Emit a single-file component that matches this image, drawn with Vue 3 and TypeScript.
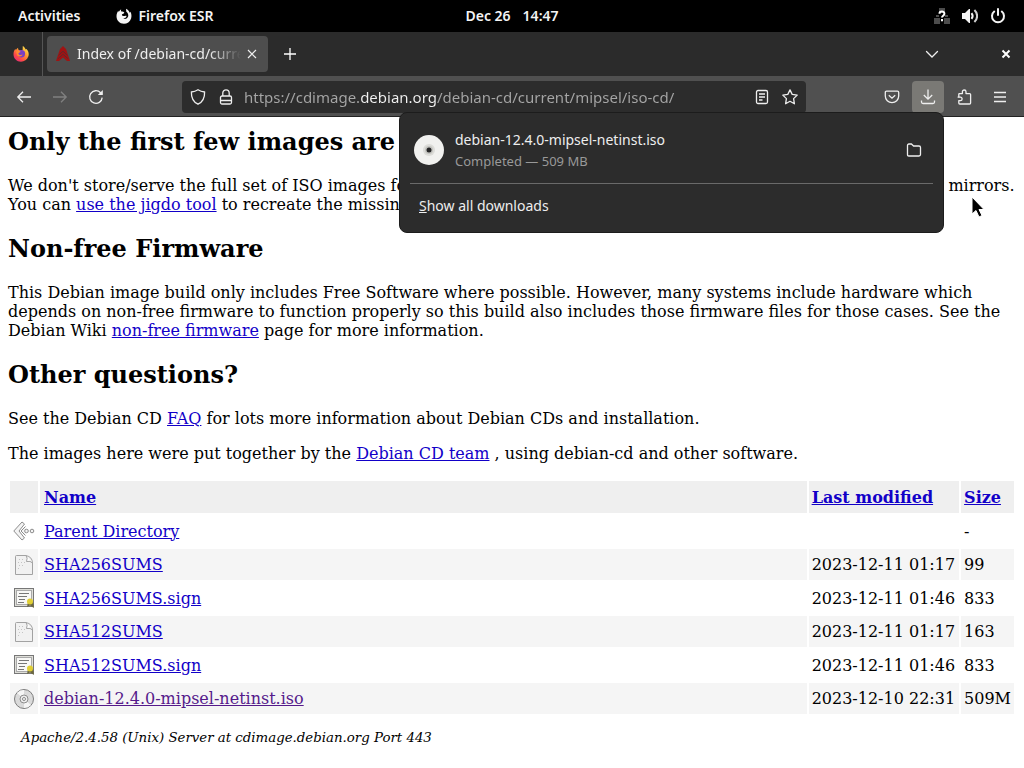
<script setup lang="ts">
import { ref } from 'vue'

interface Entry {
  name: string
  kind: 'back' | 'text' | 'sign' | 'disc'
  modified: string
  size: string
  visited?: boolean
}

const entries: Entry[] = [
  { name: 'Parent Directory', kind: 'back', modified: '', size: '-' },
  { name: 'SHA256SUMS', kind: 'text', modified: '2023-12-11 01:17', size: '99' },
  { name: 'SHA256SUMS.sign', kind: 'sign', modified: '2023-12-11 01:46', size: '833' },
  { name: 'SHA512SUMS', kind: 'text', modified: '2023-12-11 01:17', size: '163' },
  { name: 'SHA512SUMS.sign', kind: 'sign', modified: '2023-12-11 01:46', size: '833' },
  { name: 'debian-12.4.0-mipsel-netinst.iso', kind: 'disc', modified: '2023-12-10 22:31', size: '509M', visited: true },
]

const address = ref('https://cdimage.debian.org/debian-cd/current/mipsel/iso-cd/')
</script>

<template>
  <div class="screen">
    <header class="topbar">
      <div class="top-left">
        <button type="button">Activities</button>
        <button type="button" class="app-menu">
          <svg width="16" height="16" viewBox="0 0 16 16" aria-hidden="true">
            <path d="M5.2 1.2C4.8 2.2 4.9 3 5.5 3.6 6.5 3.4 7.6 3.6 8.3 4.4 8 5.6 6.9 5.7 6.1 6.3 5.5 7 6.3 8 7.4 8.1 8.6 8.2 9.4 7.4 10.6 8 10.2 9.7 8.7 10.8 7 10.5 9 11.6 11.6 10.6 12.2 8.3 12.6 6.3 11.7 4.6 10.3 3.7L10 .8C12 1.8 13.2 3.2 13.6 4.7L14.4 3.8C15.5 5.8 15.8 8.3 15.1 10.4 14 13.8 11.1 15.8 7.9 15.8 3.7 15.8.5 12.4.5 8.3.5 6.4 1.1 4.4 2.3 2.8L2.7 3.9C3.3 2.8 4.1 1.8 5.2 1.2Z" fill="#f4f4f4" />
          </svg>
          <span>Firefox ESR</span>
        </button>
      </div>
      <button type="button" class="clock"><span>Dec 26</span><span>14:47</span></button>
      <button type="button" class="tray" aria-label="System">
        <svg width="16" height="16" viewBox="0 0 16 16">
          <path d="M5 0h6v5H5zM0 10h6v6H0zM10 10h6v6h-6zM2 7h3v2H2zM11 7h3v2h-3z" fill="#4c4c4c" />
          <path d="M5.5 5.8C5.5 2.8 10.4 2.7 10.4 5.8 10.4 7.8 8 7.8 8 9.6M8 11.1V13.2" fill="none" stroke="#fff" stroke-width="2" />
        </svg>
        <svg width="16" height="16" viewBox="0 0 16 16">
          <path d="M0 5h3l4-4h1v14H7l-4-4H0z" fill="#f4f4f4" />
          <path d="M9.5 5.2C10.8 6.8 10.8 9.2 9.5 10.8" fill="none" stroke="#f4f4f4" stroke-width="2" />
          <path d="M12.4 2C16 5.4 16 10.6 12.4 14" fill="none" stroke="#d0d0d0" stroke-width="2" />
        </svg>
        <svg width="16" height="16" viewBox="0 0 16 16" fill="none" stroke="#f4f4f4" stroke-width="2" stroke-linecap="round">
          <path d="M4.2 3.6A6 6 0 1 0 11.8 3.6M8 1V7" />
        </svg>
      </button>
    </header>

    <div class="tabbar">
      <button type="button" class="view" aria-label="Firefox View">
        <svg width="16" height="16" viewBox="0 0 16 16">
          <defs>
            <linearGradient id="fox" x1="0.85" y1="0.1" x2="0.2" y2="0.95">
              <stop offset="0" stop-color="#ffe04a" />
              <stop offset="0.4" stop-color="#ff9431" />
              <stop offset="0.75" stop-color="#ff4848" />
              <stop offset="1" stop-color="#e52e75" />
            </linearGradient>
          </defs>
          <path d="M9.8 0C11.4 1 12.3 2.3 12.8 3.6L13.6 3C15.6 5.2 16.2 8 15.3 10.6 14.1 13.8 11.3 15.8 8 15.8 3.8 15.8.5 12.5.5 8.3.5 6.2 1.2 4.3 2.3 3L2.9 4.1C3.4 3 4.2 2.2 5.1 1.7 5 3 5.3 3.6 6 4L9.6 4.2Z" fill="url(#fox)" />
          <circle cx="8.4" cy="7.8" r="3.7" fill="#7a3fc4" />
          <path d="M3.1 5.6C4.5 4.3 6.5 4.4 7.6 5.5 7.1 6.6 5.8 6.6 5.4 7.4 5.6 9 8 9.3 9.7 8.5 8.8 10.8 5.6 11.2 4.1 9.2Z" fill="#ff8a32" />
        </svg>
      </button>
      <div class="tab">
        <svg class="favicon" width="16" height="16" viewBox="0 0 16 16" aria-hidden="true">
          <path d="M8 0 11 3 15 15H12L8 11.5 4 15H1L5 3Z" fill="#a01313" />
          <path d="M3.6 9.2 8 5.2 12.4 9.2M2.8 12.8 8 8.4 13.2 12.8" fill="none" stroke="#60282b" stroke-width="1" />
        </svg>
        <span class="tab-title">Index of /debian-cd/current</span>
        <button type="button" class="tab-close" aria-label="Close tab">
          <svg width="10" height="10" viewBox="0 0 10 10"><path d="M1 1 9 9M9 1 1 9" fill="none" stroke="#eee" stroke-width="1.2" /></svg>
        </button>
      </div>
      <button type="button" class="icon-btn" aria-label="New tab">
        <svg width="14" height="14" viewBox="0 0 14 14"><path d="M7 1V13M1 7H13" fill="none" stroke="#fff" stroke-width="1.3" /></svg>
      </button>
      <div class="grow"></div>
      <button type="button" class="icon-btn" aria-label="List all tabs">
        <svg width="14" height="14" viewBox="0 0 14 14"><path d="M1.5 4.5 7 10 12.5 4.5" fill="none" stroke="#eee" stroke-width="1.3" stroke-linecap="round" /></svg>
      </button>
      <button type="button" class="icon-btn window-close" aria-label="Close window">
        <svg width="10" height="10" viewBox="0 0 10 10"><path d="M1.5 1.5 8.5 8.5M8.5 1.5 1.5 8.5" fill="none" stroke="#fff" stroke-width="2" /></svg>
      </button>
    </div>

    <nav class="toolbar" aria-label="Navigation">
      <button type="button" class="icon-btn" aria-label="Back">
        <svg width="16" height="16" viewBox="0 0 16 16"><path d="M15 8H2M7 2.8 1.8 8 7 13.2" /></svg>
      </button>
      <button type="button" class="icon-btn" aria-label="Forward" disabled>
        <svg width="16" height="16" viewBox="0 0 16 16"><path d="M1 8H14M9 2.8 14.2 8 9 13.2" /></svg>
      </button>
      <button type="button" class="icon-btn" aria-label="Reload">
        <svg width="16" height="16" viewBox="0 0 16 16"><path d="M14.2 8.6A6.3 6.3 0 1 1 12.6 3.8L14 5.2" /><path d="M14.8 1V6H9.8Z" fill="#eee" stroke="none" /></svg>
      </button>
      <div class="spacer"></div>
      <div class="urlbar">
        <svg width="16" height="16" viewBox="0 0 16 16" aria-hidden="true"><path d="M8 .8C9.8 2 12.2 2.8 14.6 3 14.8 8.5 12.8 13 8 15.2 3.2 13 1.2 8.5 1.4 3 3.8 2.8 6.2 2 8 .8Z" /></svg>
        <svg width="16" height="16" viewBox="0 0 16 16" aria-hidden="true"><rect x="2.5" y="7" width="11" height="8" rx="1.5" /><path d="M4.8 7V4A3.2 3.2 0 0 1 11.2 4V7M2.5 11.5H13.5" /></svg>
        <input v-model="address" type="text" aria-label="Address" spellcheck="false" />
        <button type="button" aria-label="Reader view">
          <svg width="16" height="16" viewBox="0 0 16 16"><rect x="2.5" y="1.5" width="11" height="13" rx="1.5" /><path d="M5 5H11M5 8H11M5 11H8.5" /></svg>
        </button>
        <button type="button" aria-label="Bookmark this page">
          <svg width="16" height="16" viewBox="0 0 16 16"><path d="M8 .9 10.2 5.4 15.2 6.1 11.6 9.6 12.4 14.8 8 12.3 3.6 14.8 4.4 9.6.8 6.1 5.8 5.4Z" stroke-linejoin="round" /></svg>
        </button>
      </div>
      <div class="spacer"></div>
      <button type="button" class="icon-btn" aria-label="Pocket">
        <svg width="16" height="16" viewBox="0 0 16 16"><path d="M2.5 2.2H13.5Q14.7 2.2 14.7 3.4V7A6.7 6.7 0 0 1 1.3 7V3.4Q1.3 2.2 2.5 2.2ZM4.8 6.2 8 9.2 11.2 6.2" /></svg>
      </button>
      <button type="button" class="icon-btn active" aria-label="Downloads" aria-expanded="true">
        <svg width="16" height="16" viewBox="0 0 16 16"><path d="M8 .5V10M3.8 6 8 10.2 12.2 6M1.5 11.5V13Q1.5 14.5 3 14.5H13Q14.5 14.5 14.5 13V11.5" /></svg>
      </button>
      <button type="button" class="icon-btn" aria-label="Extensions">
        <svg width="16" height="16" viewBox="0 0 16 16"><path d="M2.8 4.6H6.4V2.8A1.8 1.8 0 0 1 10 2.800V4.6H13.6Q14.6 4.6 14.6 5.6V14Q14.6 15 13.6 15H3.800Q2.8 15 2.8 14V11.6H4.4A1.700 1.700 0 0 0 4.400 8.2H1.600" stroke-linejoin="round" /><path d="M2.8 8.2V4.6" /></svg>
      </button>
      <button type="button" class="icon-btn" aria-label="Menu">
        <svg width="16" height="16" viewBox="0 0 16 16"><path d="M2 3.5H14M2 8H14M2 12.5H14" /></svg>
      </button>

      <section class="downloads" aria-label="Downloads">
        <div class="download">
          <svg width="30" height="30" viewBox="0 0 30 30" aria-hidden="true">
            <circle cx="15" cy="15" r="15" fill="#f1f1ef" />
            <circle cx="15" cy="15" r="6" fill="#dcdcd8" />
            <circle cx="15" cy="15" r="4" fill="#c4c4c0" />
            <circle cx="15" cy="15" r="2.5" fill="#262626" />
          </svg>
          <div class="download-text">
            <div class="download-name">debian-12.4.0-mipsel-netinst.iso</div>
            <div class="download-state">Completed — 509 MB</div>
          </div>
          <button type="button" class="folder" aria-label="Show in folder">
            <svg width="16" height="16" viewBox="0 0 16 16"><path d="M1.5 12.8V3.4Q1.5 2 2.9 2H5.4L7.6 4H13Q14.5 4 14.5 5.4V12.6Q14.5 14 13 14H2.8Q1.5 14 1.5 12.8Z" /></svg>
          </button>
        </div>
        <button type="button" class="show-all"><u>S</u>how all downloads</button>
      </section>
    </nav>

    <main class="page">
      <h2>Only the first few images are available</h2>
      <p>
        We don't store/serve the full set of ISO images for all architectures, to reduce the amount of space taken up on our mirrors.
        You can <a href="#jigdo">use the jigdo tool</a> to recreate the missing ISO images instead.
      </p>
      <h2>Non-free Firmware</h2>
      <p>
        This Debian image build only includes Free Software where possible. However, many systems include hardware which
        depends on non-free firmware to function properly so this build also includes those firmware files for those cases. See the
        Debian Wiki <a href="#firmware">non-free firmware</a> page for more information.
      </p>
      <h2>Other questions?</h2>
      <p>See the Debian CD <a href="#faq">FAQ</a> for lots more information about Debian CDs and installation.</p>
      <p>The images here were put together by the <a href="#team">Debian CD team</a> , using debian-cd and other software.</p>

      <table>
        <thead>
          <tr>
            <th class="icon"></th>
            <th class="name"><a href="#name">Name</a></th>
            <th class="date"><a href="#modified">Last modified</a></th>
            <th><a href="#size">Size</a></th>
          </tr>
        </thead>
        <tbody>
          <tr v-for="entry in entries" :key="entry.name">
            <td class="icon">
              <svg v-if="entry.kind === 'back'" width="22" height="22" viewBox="0 0 22 22" fill="#f4f4f4" stroke="#8c8c8c">
                <path d="M9 2 .8 11 9 20 11.500 18 6 11 11.500 4ZM12.500 6.5 8 11 12.500 15.5" />
                <circle cx="13.5" cy="11" r="1.8" /><circle cx="19" cy="11" r="1.8" />
              </svg>
              <svg v-else-if="entry.kind === 'text'" width="22" height="22" viewBox="0 0 22 22">
                <path d="M3.500 1.5H13Q19.5 3 19.5 9V20.500H2.500V2.500Q2.500 1.500 3.500 1.500Z" fill="#f1f1f1" stroke="#a2a2a2" />
                <path d="M13 1.5Q15 4 13.5 7.500 17.500 6.500 19.5 9" fill="#fff" stroke="#a2a2a2" />
                <path d="M6 5.500H10M5 8.500H12M6 11.500H11M5 14.500H8" stroke="#c4c4c4" stroke-dasharray="1 2" />
              </svg>
              <svg v-else-if="entry.kind === 'sign'" width="22" height="22" viewBox="0 0 22 22">
                <rect x="1.5" y="1.5" width="19" height="18" fill="#deded8" stroke="#777" />
                <rect x="3.5" y="3.5" width="15" height="14" fill="#f8f8f6" stroke="#aaa" />
                <path d="M6 6.5H16M5 9.5H14M6 12.5H12M5 15.5H11" stroke="#777" />
                <path d="M15 15 14 20 17 18.500 21 21 20 15Z" fill="#6d6840" />
                <circle cx="17" cy="14.500" r="3" fill="#e0cf35" />
              </svg>
              <svg v-else width="22" height="22" viewBox="0 0 22 22" fill="none">
                <circle cx="11" cy="11" r="9.5" fill="#dadada" stroke="#7d7d7d" />
                <path d="M11 11 4 5A9 9 0 0 1 11 2ZM11 11 18 17A9 9 0 0 1 11 20Z" fill="#f5f5f5" />
                <circle cx="11" cy="11" r="4" fill="#ededed" stroke="#8e8e8e" />
                <circle cx="11" cy="11" r="1.500" fill="#fff" stroke="#888" />
              </svg>
            </td>
            <td class="name"><a :href="'#' + entry.name" :class="{ visited: entry.visited }">{{ entry.name }}</a></td>
            <td class="date">{{ entry.modified }}</td>
            <td>{{ entry.size }}</td>
          </tr>
        </tbody>
      </table>
      <address>Apache/2.4.58 (Unix) Server at cdimage.debian.org Port 443</address>
    </main>

    <svg class="pointer" width="16" height="24" viewBox="0 0 16 24" aria-hidden="true">
      <path d="M2 1V18L6 14.500 9 21 12 19.500 9 13.500H14Z" fill="#000" stroke="#fff" />
    </svg>
  </div>
</template>

<style>
body {
  margin: 0;
  background: #fff;
}
</style>

<style scoped>
.screen {
  position: relative;
  min-height: 100vh;
  overflow: hidden;
  color: #eee;
  font-family: "Noto Sans", "Open Sans", sans-serif;
  font-size: 14px;
  line-height: 20px;
}
button {
  margin: 0;
  padding: 0;
  border: 0;
  background: none;
  color: inherit;
  font: inherit;
}
svg {
  display: block;
  flex: none;
}
.topbar {
  display: grid;
  grid-template-columns: 1fr auto 1fr;
  align-items: center;
  height: 32px;
  padding: 0 18px;
  background: #000;
  color: #f4f4f4;
  font-weight: 600;
}
.top-left,
.app-menu,
.clock,
.tray {
  display: flex;
  align-items: center;
}
.top-left {
  gap: 36px;
}
.app-menu {
  gap: 6px;
}
.clock {
  gap: 12px;
}
.tray {
  justify-self: end;
  gap: 12px;
}
.tabbar {
  display: flex;
  align-items: center;
  height: 44px;
  padding-right: 8px;
  background: #2b2b2b;
}
.view {
  display: flex;
  align-items: center;
  justify-content: center;
  width: 43px;
  height: 44px;
  margin-right: 4px;
  border-right: 1px solid #555;
}
.tab {
  display: flex;
  align-items: center;
  box-sizing: border-box;
  width: 221px;
  height: 36px;
  margin-right: 6px;
  padding: 0 11px 0 8px;
  border-radius: 4px;
  background: #4e4e4e;
}
.tab-title {
  flex: 1;
  min-width: 0;
  margin: 0 6px;
  overflow: hidden;
  white-space: nowrap;
  mask-image: linear-gradient(to left, transparent, #000 32px);
}
.grow {
  flex: 1;
}
.icon-btn {
  display: flex;
  flex: none;
  align-items: center;
  justify-content: center;
  width: 32px;
  height: 32px;
  border-radius: 4px;
}
.window-close {
  margin-left: 42px;
  margin-right: -6px;
}
.toolbar {
  position: relative;
  display: flex;
  align-items: center;
  gap: 4px;
  box-sizing: border-box;
  height: 41px;
  padding: 1px 8px 0;
  border-bottom: 1px solid #222;
  background: #505050;
}
.toolbar svg path,
.toolbar svg rect {
  stroke-width: 1.3;
}
.icon-btn svg,
.urlbar svg,
.folder svg {
  fill: none;
  stroke: #eee;
}
.icon-btn:disabled {
  opacity: 0.3;
}
.active {
  background: #7a7975;
}
.spacer {
  width: 62px;
}
.urlbar {
  display: flex;
  flex: 1;
  align-items: center;
  gap: 12px;
  min-width: 0;
  height: 32px;
  padding: 0 8px;
  border-radius: 4px;
  background: #2c2c2c;
}
.urlbar input {
  flex: 1;
  min-width: 0;
  margin-left: -2px;
  padding: 0;
  border: 0;
  outline: 0;
  background: linear-gradient(to right, #a6a6a6 116px, #f2f2f2 116px 193px, #a6a6a6 193px);
  background-clip: text;
  color: transparent;
  font: inherit;
  font-size: 15px;
  line-height: 24px;
}
.downloads {
  position: absolute;
  top: 36px;
  right: 80px;
  z-index: 2;
  box-sizing: border-box;
  width: 545px;
  padding: 16px 10px;
  border: 1px solid #1c1c1c;
  border-radius: 8px;
  background: #2c2c2c;
}
.download {
  display: flex;
  align-items: center;
  gap: 11px;
  padding: 0 11px 12px 4px;
  border-bottom: 1px solid #6a6a6a;
}
.download-text {
  flex: 1;
}
.download-name {
  line-height: 22px;
}
.download-state {
  color: #999;
  font-size: 13px;
}
.show-all {
  display: block;
  margin: 12px 0 0 9px;
}
.page {
  padding: 10px 8px 20px;
  color: #000;
  font: 16px/19px "DejaVu Serif", serif;
}
h2 {
  margin: 20px 0;
  font-size: 24px;
  line-height: 29px;
}
h2:first-child {
  margin-top: 0;
}
p {
  margin: 16px 0;
}
a {
  color: #1200c8;
}
a.visited {
  color: #551a8b;
}
table {
  width: 100%;
  border-spacing: 2px;
}
th,
td {
  height: 26px;
  padding: 3px;
  text-align: left;
  white-space: nowrap;
}
th {
  background: #efefef;
}
tbody tr:nth-child(even) td {
  height: 25px;
  background: #f5f5f5;
}
.icon {
  width: 22px;
}
.name {
  width: 100%;
  padding-left: 4px;
}
.date {
  padding-right: 4px;
}
address {
  margin: 12px 13px 0;
  font-size: smaller;
}
.pointer {
  position: absolute;
  top: 196px;
  left: 970px;
}
</style>
